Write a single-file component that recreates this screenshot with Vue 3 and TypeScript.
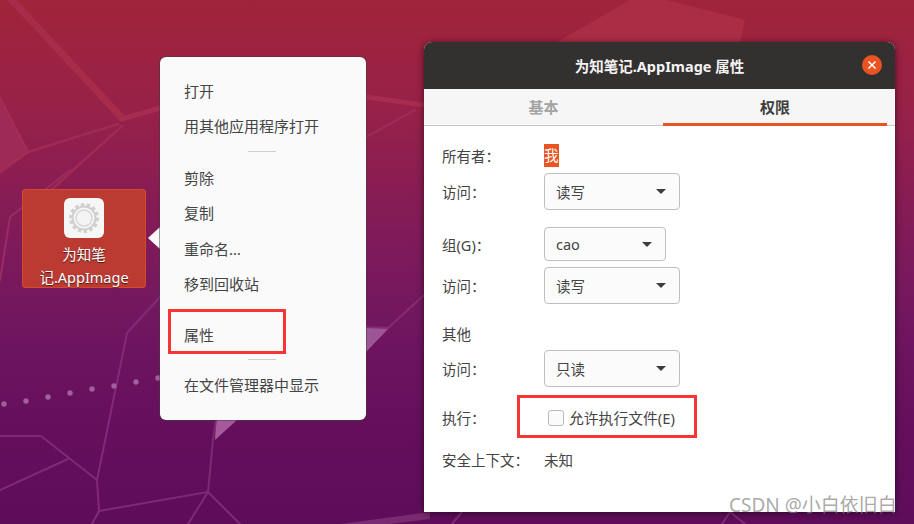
<template>
  <div class="desktop">
    <!-- 壁纸 -->
    <svg class="wallpaper" viewBox="0 0 914 524" width="914" height="524">
      <defs>
        <linearGradient id="bg" x1="0" y1="0" x2="0" y2="1">
          <stop offset="0" stop-color="#a0243a" />
          <stop offset="0.2" stop-color="#982148" />
          <stop offset="0.4" stop-color="#851c56" />
          <stop offset="0.6" stop-color="#721760" />
          <stop offset="0.8" stop-color="#660f5c" />
          <stop offset="1" stop-color="#5e0d5b" />
        </linearGradient>
      </defs>
      <rect width="914" height="524" fill="url(#bg)" />
      <polygon points="0,98 28,152 0,172" fill="#9e2a58" />
      <polygon points="366,328 389,328 366,352" fill="#9c5596" />
      <polygon points="216,420 237,420 215,440" fill="#a65a9c" />
      <polygon points="340,524 430,512 430,519 390,524" fill="#7a2a70" />
      <polygon points="557,42 630,0 667,0 745,20 740,42" fill="#ab2d45" />
      <g fill="none" stroke-linecap="round">
        <path d="M12 0 L122 118" stroke="#a62c4a" stroke-width="7" />
        <path d="M122 119 L160 108 M366 97 L424 105" stroke="#a62c50" stroke-width="5" />
        <path d="M28 152 L118 124 M122 126 L40 200 M366 137 L415 110" stroke="#a02a56" stroke-width="2.5" />
        <path d="M70 170 L10 217 L0 280" stroke="#9a2c64" stroke-width="2" />
        <path d="M0 98 L28 152 L0 172" stroke="#a62c54" stroke-width="2.5" />
        <path d="M160 297 L127 333 L97 480 L99 511 L92 524" stroke="#84297a" stroke-width="2" />
        <path d="M0 436 L41 436 L97 480 M0 490 L68 459" stroke="#7f2a74" stroke-width="2" />
        <path d="M99 511 L208 492 L213 440 L216 420 M188 524 L208 492 L240 524" stroke="#7f2a74" stroke-width="2" />
        <path d="M366 327 L388 328 L424 295" stroke="#882a72" stroke-width="2" />
        <path d="M452 524 L462 512 M730 512 L722 524 M730 512 L745 524" stroke="#7f2a74" stroke-width="2" />
      </g>
      <g fill="#a0609c">
        <circle v-for="dot in dots" :key="dot[0]" :cx="dot[0]" :cy="dot[1]" r="2.7" />
      </g>
    </svg>

    <!-- 桌面图标 -->
    <div class="file-icon">
      <div class="app-tile">
        <svg viewBox="0 0 40 40" width="40" height="40">
          <circle cx="20" cy="20" r="13.5" fill="none" stroke="#cfcfcf" stroke-width="3" stroke-dasharray="3.4 2.6" />
          <circle cx="20" cy="20" r="11.5" fill="none" stroke="#cfcfcf" stroke-width="2" />
          <circle cx="20" cy="20" r="8" fill="#f4f4f4" stroke="#d6d6d6" stroke-width="1.4" />
        </svg>
      </div>
      <div class="file-name">为知笔<br />记.AppImage</div>
    </div>

    <!-- 右键菜单 -->
    <div class="menu-arrow"></div>
    <div class="context-menu">
      <div class="menu-item">打开</div>
      <div class="menu-item">用其他应用程序打开</div>
      <div class="menu-sep sep-first"></div>
      <div class="menu-item">剪除</div>
      <div class="menu-item">复制</div>
      <div class="menu-item">重命名…</div>
      <div class="menu-item">移到回收站</div>
      <div class="menu-item prop-item">属性</div>
      <div class="menu-sep"></div>
      <div class="menu-item">在文件管理器中显示</div>
    </div>

    <!-- 属性窗口 -->
    <div class="dialog">
      <div class="titlebar">
        <span class="title">为知笔记.AppImage 属性</span>
        <button class="close-btn">
          <svg viewBox="0 0 20 20" width="20" height="20">
            <path d="M6.5 6.5 L13.5 13.5 M13.5 6.5 L6.5 13.5" stroke="#fff" stroke-width="1.5" />
          </svg>
        </button>
      </div>
      <div class="tabs">
        <div class="tab">基本</div>
        <div class="tab active">权限</div>
      </div>
      <div class="form">
        <div class="row owner-row">
          <label>所有者：</label>
          <span class="owner">我</span>
        </div>
        <div class="row gap-6">
          <label>访问：</label>
          <div class="combo">读写<i class="caret"></i></div>
        </div>
        <div class="row gap-17">
          <label>组(G)：</label>
          <div class="combo combo-group">cao<i class="caret"></i></div>
        </div>
        <div class="row gap-6">
          <label>访问：</label>
          <div class="combo">读写<i class="caret"></i></div>
        </div>
        <div class="row other-row">
          <label>其他</label>
        </div>
        <div class="row gap-5">
          <label>访问：</label>
          <div class="combo">只读<i class="caret"></i></div>
        </div>
        <div class="row exec-row">
          <label>执行：</label>
          <span class="check-wrap">
            <span class="check"></span>
            <span>允许执行文件(E)</span>
          </span>
        </div>
        <div class="row security-row">
          <label>安全上下文：</label>
          <span>未知</span>
        </div>
      </div>
    </div>

    <!-- 标注红框 -->
    <div class="mark mark-prop"></div>
    <div class="mark mark-exec"></div>
    <div class="watermark">CSDN @小白依旧白</div>
  </div>
</template>

<script setup lang="ts">
const dots: number[][] = [
  [4, 404],
  [26, 401],
  [48, 397],
  [70, 393],
  [92, 389],
  [114, 386],
  [136, 382],
  [158, 378],
]
</script>

<style>
body {
  margin: 0;
}
</style>

<style scoped>
.desktop {
  position: relative;
  width: 914px;
  height: 524px;
  overflow: hidden;
  font-family: "Noto Sans", "Noto Sans CJK SC", sans-serif;
  font-size: 14.5px;
  color: #444;
}

.wallpaper {
  position: absolute;
  left: 0;
  top: 0;
}

.file-icon {
  position: absolute;
  left: 22px;
  top: 189px;
  width: 124px;
  height: 99px;
  box-sizing: border-box;
  background-color: #bb3b33;
  border: 1px solid #d8492c;
  border-radius: 3px;
  display: flex;
  flex-direction: column;
  align-items: center;
  padding-top: 8px;
}

.app-tile {
  width: 40px;
  height: 40px;
  background-color: #f6f6f6;
  border-radius: 6px;
}

.file-name {
  margin-top: 5px;
  text-align: center;
  color: #fff;
  font-size: 14.5px;
  line-height: 23px;
  text-shadow: 0 1px 1px rgba(0, 0, 0, 0.6);
}

.menu-arrow {
  position: absolute;
  left: 148px;
  top: 227px;
  width: 0;
  height: 0;
  border-top: 11.5px solid transparent;
  border-bottom: 11.5px solid transparent;
  border-right: 12px solid #fafafa;
}

.context-menu {
  position: absolute;
  left: 160px;
  top: 57px;
  width: 206px;
  height: 363px;
  box-sizing: border-box;
  padding-top: 16.5px;
  background-color: #fafafa;
  border-radius: 6px;
  box-shadow: 0 0 0 1px rgba(60, 60, 60, 0.5);
}

.menu-item {
  height: 35.5px;
  line-height: 35.5px;
  padding-left: 24px;
  font-size: 15px;
}

.menu-item:nth-of-type(7) {
  margin-top: -0.5px;
}

.prop-item {
  margin-top: 15.5px;
}

.menu-sep {
  width: 28px;
  height: 1px;
  margin: 6px 0 8px 88px;
  background-color: #cfcfcf;
}

.sep-first {
  margin-bottom: 9px;
}

.dialog {
  position: absolute;
  left: 424px;
  top: 42px;
  width: 471px;
  height: 470px;
  background-color: #fff;
  border-radius: 8px 8px 0 0;
  box-shadow: 0 1px 7px rgba(0, 0, 0, 0.55);
}

.titlebar {
  position: relative;
  height: 47px;
  background-color: #333030;
  border-radius: 8px 8px 0 0;
  display: flex;
  align-items: center;
  justify-content: center;
}

.title {
  color: #f4f4f4;
  font-size: 14.5px;
  font-weight: 700;
}

.close-btn {
  position: absolute;
  right: 13px;
  top: 13px;
  width: 20px;
  height: 20px;
  padding: 0;
  border: none;
  border-radius: 50%;
  background-color: #e95420;
  display: flex;
}

.tabs {
  display: flex;
  height: 37px;
  box-sizing: border-box;
  padding-right: 8px;
  background-color: #f6f6f6;
  border-bottom: 1px solid #c8c8c8;
}

.tab {
  flex: 1;
  text-align: center;
  line-height: 37px;
  font-size: 15px;
  font-weight: 700;
  color: #a3a3a3;
  height: 37px;
  box-sizing: border-box;
}

.tab:first-child {
  flex: 0 0 239px;
}

.tab.active {
  color: #3d3d3d;
  border-bottom: 3px solid #e95420;
}

.form {
  display: flex;
  flex-direction: column;
  padding: 18px 0 0 18px;
}

.row {
  display: flex;
  align-items: center;
  min-height: 23px;
}

.row label {
  flex: 0 0 102px;
}

.gap-6 {
  margin-top: 6px;
}

.gap-17 {
  margin-top: 17px;
}

.gap-5 {
  margin-top: 5px;
}

.other-row {
  margin-top: 18px;
}

.exec-row {
  margin-top: 19px;
}

.security-row {
  margin-top: 19px;
}

.owner {
  display: inline-block;
  width: 15px;
  height: 23px;
  line-height: 23px;
  background-color: #e95420;
  color: #fff;
}

.combo {
  position: relative;
  width: 136px;
  height: 37px;
  box-sizing: border-box;
  padding-left: 11px;
  padding-top: 1px;
  line-height: 35px;
  background-color: #fbfbfb;
  border: 1px solid #bfbfbf;
  border-radius: 4px;
}

.combo-group {
  width: 122px;
  height: 34px;
  padding-top: 0;
  line-height: 32px;
}

.caret {
  position: absolute;
  right: 13px;
  top: 50%;
  margin-top: -2.5px;
  width: 0;
  height: 0;
  border-left: 5px solid transparent;
  border-right: 5px solid transparent;
  border-top: 5px solid #3d3d3d;
}

.check-wrap {
  display: flex;
  align-items: center;
  gap: 5px;
  padding-left: 4px;
  font-size: 14.8px;
}

.check {
  width: 16px;
  height: 16px;
  box-sizing: border-box;
  background-color: #fbfbfb;
  border: 1px solid #b9b9b9;
  border-radius: 3px;
}

.mark {
  position: absolute;
  box-sizing: border-box;
  border: 3px solid #f73535;
}

.mark-prop {
  left: 168px;
  top: 309px;
  width: 118px;
  height: 45px;
}

.mark-exec {
  left: 517px;
  top: 395px;
  width: 180px;
  height: 43px;
}

.watermark {
  position: absolute;
  left: 729px;
  top: 492px;
  font-size: 19px;
  line-height: 26px;
  color: rgba(120, 120, 120, 0.65);
  white-space: nowrap;
}
</style>
